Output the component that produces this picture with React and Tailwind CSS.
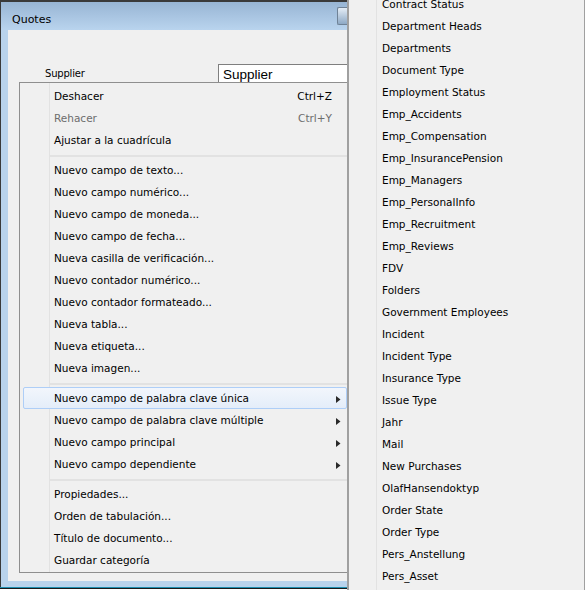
const groups = [
  [
    { label: "Deshacer", shortcut: "Ctrl+Z" },
    { label: "Rehacer", shortcut: "Ctrl+Y", disabled: true },
    { label: "Ajustar a la cuadrícula" },
  ],
  [
    { label: "Nuevo campo de texto..." },
    { label: "Nuevo campo numérico..." },
    { label: "Nuevo campo de moneda..." },
    { label: "Nuevo campo de fecha..." },
    { label: "Nueva casilla de verificación..." },
    { label: "Nuevo contador numérico..." },
    { label: "Nuevo contador formateado..." },
    { label: "Nueva tabla..." },
    { label: "Nueva etiqueta..." },
    { label: "Nueva imagen..." },
  ],
  [
    { label: "Nuevo campo de palabra clave única", sub: true, active: true },
    { label: "Nuevo campo de palabra clave múltiple", sub: true },
    { label: "Nuevo campo principal", sub: true },
    { label: "Nuevo campo dependiente", sub: true },
  ],
  [
    { label: "Propiedades..." },
    { label: "Orden de tabulación..." },
    { label: "Título de documento..." },
    { label: "Guardar categoría" },
  ],
];

const keywords = [
  "Contract Status",
  "Department Heads",
  "Departments",
  "Document Type",
  "Employment Status",
  "Emp_Accidents",
  "Emp_Compensation",
  "Emp_InsurancePension",
  "Emp_Managers",
  "Emp_PersonalInfo",
  "Emp_Recruitment",
  "Emp_Reviews",
  "FDV",
  "Folders",
  "Government Employees",
  "Incident",
  "Incident Type",
  "Insurance Type",
  "Issue Type",
  "Jahr",
  "Mail",
  "New Purchases",
  "OlafHansendoktyp",
  "Order State",
  "Order Type",
  "Pers_Anstellung",
  "Pers_Asset",
];

function MenuItem({ item }) {
  return (
    <div
      className={`relative h-[22px] flex items-center pl-[34px] pr-[5px] ${
        item.disabled ? "text-[#6d6d6d]" : "text-black"
      }`}
    >
      {item.active && (
        <div className="absolute left-[3px] right-0 -top-[1px] bottom-[1px] rounded-[2px] border border-[#aecef7] bg-gradient-to-b from-[#f2f6fc] to-[#e4edf9]" />
      )}
      <span className="relative flex-1 whitespace-nowrap">{item.label}</span>
      {item.shortcut && (
        <span className="relative mr-[10px]">{item.shortcut}</span>
      )}
      {item.sub && (
        <svg width="5" height="7" viewBox="0 0 5 7" className="relative mr-[1px]">
          <path d="M0 0 L4.5 3.5 L0 7 Z" fill="#2a2a2a" />
        </svg>
      )}
    </div>
  );
}

export default function App() {
  return (
    <div
      className="w-[585px] h-[590px] overflow-hidden bg-white flex text-[10.5px]"
      style={{ fontFamily: '"DejaVu Sans", sans-serif' }}
    >
      <div className="relative w-[347px] h-full bg-white">
        <div className="h-[587px] border-t-2 border-l border-[#3a3a3a] bg-[#b9d3ec] flex flex-col">
          <div className="h-[28px] shrink-0 flex items-center pl-[11px] pt-[8px] bg-gradient-to-b from-[#98b5d4] to-[#b9d4ee]">
            <span className="text-[11px] text-black">Quotes</span>
            <div className="ml-auto -mt-[8px] w-[10px] h-[18px] border border-r-0 border-[#6f8296] rounded-l-[2px] bg-gradient-to-b from-[#e4edf6] to-[#8ea9c5]" />
          </div>
          <div className="ml-[7px] h-[551px] bg-[#f0f0f0]">
            <div className="h-[52px] flex items-end pl-[37px]">
              <span className="w-[173px] shrink-0 mb-[1px] text-[10px] tracking-[-0.2px]">Supplier</span>
              <div
                className="flex-1 h-[18px] bg-white border-l border-t border-[#7f7f7f] pl-[4px] pt-[1px] text-[13.5px] leading-[18px]"
                style={{ fontFamily: '"Liberation Sans", sans-serif' }}
              >
                Supplier
              </div>
            </div>
          </div>
        </div>
        <div className="h-[1px] bg-[#1f8fb0]" />
        <div className="h-[1px] bg-[#1a1a1a]" />
        <div className="absolute left-[19px] top-[82px] w-[328px] h-[491px] border-l border-t border-b border-[#8f8f8f] bg-[#f0f0f0] pt-[3px]">
          <div className="absolute left-[29px] top-0 bottom-0 w-[1px] bg-[#e2e2e2]" />
          {groups.map((group, i) => (
            <div key={i}>
              {i > 0 && <div className="ml-[30px] h-[5px] mb-[3px] border-b-2 border-[#e2e2e2]" />}
              {group.map((item) => (
                <MenuItem key={item.label} item={item} />
              ))}
            </div>
          ))}
        </div>
      </div>
      <div className="flex-1 h-full bg-[#f0f0f0] border-l-2 border-r border-[#a0a0a0] relative overflow-hidden">
        <div className="absolute left-[27px] top-0 bottom-0 w-[1px] bg-[#e2e2e2]" />
        <div className="pl-[33px] -mt-[6px]">
          {keywords.map((k) => (
            <div key={k} className="h-[22px] flex items-center whitespace-nowrap">
              {k}
            </div>
          ))}
        </div>
      </div>
    </div>
  );
}
